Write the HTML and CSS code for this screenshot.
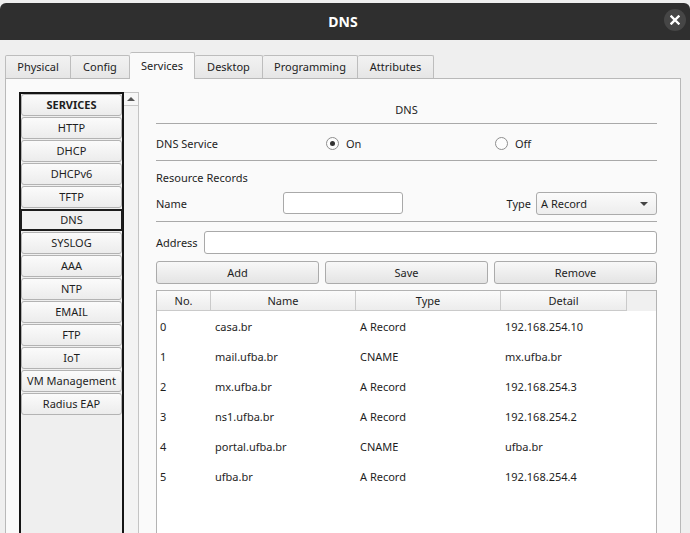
FILE: index.html
```html
<!DOCTYPE html>
<html>
<head>
<meta charset="utf-8">
<link rel="stylesheet" href="styles.css">
</head>
<body>
<div class="window">
  <header class="titlebar">
    <span class="title">DNS</span>
    <span class="close"><svg width="10" height="10" viewBox="0 0 10 10"><path d="M1.5 1.5 L8.5 8.5 M8.5 1.5 L1.5 8.5" stroke="#fff" stroke-width="2.4" stroke-linecap="square"/></svg></span>
  </header>
  <nav class="tabs">
    <span class="tab w-phys">Physical</span>
    <span class="tab w-conf">Config</span>
    <span class="tab active w-serv">Services</span>
    <span class="tab w-desk">Desktop</span>
    <span class="tab w-prog">Programming</span>
    <span class="tab w-attr">Attributes</span>
  </nav>
  <main class="pane">
    <aside class="sidebar">
      <div class="svc-list">
        <div class="svc head">SERVICES</div>
        <div class="svc">HTTP</div>
        <div class="svc">DHCP</div>
        <div class="svc">DHCPv6</div>
        <div class="svc">TFTP</div>
        <div class="svc selected">DNS</div>
        <div class="svc">SYSLOG</div>
        <div class="svc">AAA</div>
        <div class="svc">NTP</div>
        <div class="svc">EMAIL</div>
        <div class="svc">FTP</div>
        <div class="svc">IoT</div>
        <div class="svc">VM Management</div>
        <div class="svc">Radius EAP</div>
      </div>
      <div class="scrollbar"><div class="scroll-up"><span class="arrow"></span></div></div>
    </aside>
    <section class="content">
      <div class="heading">DNS</div>
      <div class="service-row">
        <span class="lbl-service">DNS Service</span>
        <span class="radio-opt"><span class="radio on"></span>On</span>
        <span class="radio-opt"><span class="radio"></span>Off</span>
      </div>
      <div class="records">
        <div class="rr-label">Resource Records</div>
        <div class="name-row">
          <span class="lbl-name">Name</span>
          <span class="input name-input"></span>
          <span class="type-group">
            <span>Type</span>
            <span class="select">A Record<span class="caret"></span></span>
          </span>
        </div>
      </div>
      <div class="address-row">
        <span>Address</span>
        <span class="input addr-input"></span>
      </div>
      <div class="buttons">
        <span class="btn">Add</span>
        <span class="btn">Save</span>
        <span class="btn">Remove</span>
      </div>
      <div class="table">
        <div class="thead">
          <span class="th c-no">No.</span>
          <span class="th c-name">Name</span>
          <span class="th c-type">Type</span>
          <span class="th c-detail">Detail</span>
          <span class="th-rest"></span>
        </div>
        <div class="tr"><span class="c-no">0</span><span class="c-name">casa.br</span><span class="c-type">A Record</span><span class="c-detail">192.168.254.10</span></div>
        <div class="tr"><span class="c-no">1</span><span class="c-name">mail.ufba.br</span><span class="c-type">CNAME</span><span class="c-detail">mx.ufba.br</span></div>
        <div class="tr"><span class="c-no">2</span><span class="c-name">mx.ufba.br</span><span class="c-type">A Record</span><span class="c-detail">192.168.254.3</span></div>
        <div class="tr"><span class="c-no">3</span><span class="c-name">ns1.ufba.br</span><span class="c-type">A Record</span><span class="c-detail">192.168.254.2</span></div>
        <div class="tr"><span class="c-no">4</span><span class="c-name">portal.ufba.br</span><span class="c-type">CNAME</span><span class="c-detail">ufba.br</span></div>
        <div class="tr"><span class="c-no">5</span><span class="c-name">ufba.br</span><span class="c-type">A Record</span><span class="c-detail">192.168.254.4</span></div>
      </div>
    </section>
  </main>
</div>
</body>
</html>
```
FILE: styles.css
```css
* { box-sizing: border-box; }
html, body {
  margin: 0;
  padding: 0;
  width: 690px;
  height: 533px;
  overflow: hidden;
  background: #efefef;
  font-family: "Noto Sans", "Open Sans", sans-serif;
  font-size: 11px;
  color: #1e1e1e;
}
.window { padding-top: 3px; }
.titlebar {
  height: 37px;
  background: #2f2f2f;
  border-radius: 6px 6px 0 0;
  display: flex;
  align-items: center;
  justify-content: center;
  position: relative;
}
.title {
  color: #ffffff;
  font-weight: bold;
  font-size: 14px;
  margin-left: -4px;
}
.close {
  position: absolute;
  right: 4px;
  top: 6px;
  width: 22px;
  height: 22px;
  border-radius: 50%;
  background: #464646;
  display: flex;
  align-items: center;
  justify-content: center;
}
.close svg { display: block; }

.tabs {
  margin-top: 15px;
  height: 23px;
  padding-left: 5px;
  display: flex;
  align-items: flex-end;
}
.tab {
  height: 23px;
  border: 1px solid #bdbdbd;
  border-bottom: none;
  border-left: none;
  border-radius: 2px 2px 0 0;
  background: linear-gradient(#f2f2f2, #e6e6e6);
  display: flex;
  align-items: center;
  justify-content: center;
  padding-bottom: 2px;
  color: #222;
}
.tab:first-child { border-left: 1px solid #bdbdbd; }
.tab.active {
  height: 27px;
  margin-bottom: -1px;
  background: #fafafa;
  position: relative;
  z-index: 1;
  padding-bottom: 2px;
}
.w-phys { width: 66px; }
.w-conf { width: 59px; }
.w-serv { width: 65px; }
.w-desk { width: 68px; }
.w-prog { width: 95px; }
.w-attr { width: 76px; }

.pane {
  margin-left: 5px;
  width: 676px;
  height: 470px;
  border: 1px solid #b9b9b9;
  background: #fafafa;
  padding: 13px 0 0 13px;
  display: flex;
  align-items: flex-start;
}
.sidebar {
  display: flex;
  height: 460px;
}
.svc-list {
  width: 105px;
  height: 100%;
  border: 2px solid #151515;
  background: #efefef;
  display: flex;
  flex-direction: column;
  gap: 1px;
}
.svc {
  height: 22px;
  border: 1px solid #b3b3b3;
  border-radius: 3px;
  background: linear-gradient(#fbfbfb, #ececec);
  display: flex;
  align-items: center;
  justify-content: center;
  padding-bottom: 2px;
  color: #1e1e1e;
}
.svc.head { font-weight: bold; }
.svc.selected {
  border: 2px solid #1c1c1c;
  border-radius: 1px;
  background: #f0f0f0;
  margin: 0 -1px;
}
.scrollbar {
  width: 15px;
  height: 100%;
  border: 1px solid #c4c4c4;
  border-left: none;
  background: #f3f3f3;
}
.scroll-up {
  height: 13px;
  border-bottom: 1px solid #c8c8c8;
  background: #f7f7f7;
  display: flex;
  align-items: center;
  justify-content: center;
}
.arrow {
  width: 0;
  height: 0;
  border-left: 4px solid transparent;
  border-right: 4px solid transparent;
  border-bottom: 4px solid #555;
}

.content {
  margin-left: 17px;
  width: 501px;
  display: flex;
  flex-direction: column;
}
.heading {
  height: 32px;
  padding-top: 5px;
  line-height: 26px;
  text-align: center;
  border-bottom: 1px solid #a9a9a9;
}
.service-row {
  height: 37px;
  padding-top: 2px;
  display: grid;
  grid-template-columns: 170px 169px 1fr;
  align-items: center;
  border-bottom: 1px solid #a9a9a9;
}
.radio-opt {
  display: flex;
  align-items: center;
  gap: 7px;
}
.radio {
  width: 13px;
  height: 13px;
  border-radius: 50%;
  border: 1px solid #8e8e8e;
  background: #fdfdfd;
  display: flex;
  align-items: center;
  justify-content: center;
}
.radio.on::after {
  content: "";
  width: 5px;
  height: 5px;
  border-radius: 50%;
  background: #333;
}
.records {
  padding-top: 9px;
  padding-bottom: 7px;
  border-bottom: 1px solid #a9a9a9;
}
.rr-label { line-height: 16px; }
.name-row {
  margin-top: 6px;
  height: 22px;
  display: flex;
  align-items: center;
}
.lbl-name { width: 127px; }
.input {
  height: 22px;
  border: 1px solid #a9a9a9;
  border-radius: 3px;
  background: #ffffff;
}
.name-input { width: 120px; }
.type-group {
  margin-left: auto;
  display: flex;
  align-items: center;
  gap: 5px;
}
.select {
  width: 121px;
  height: 23px;
  border: 1px solid #ababab;
  border-radius: 3px;
  background: linear-gradient(#fbfbfb, #ededed);
  display: flex;
  align-items: center;
  padding-left: 4px;
  position: relative;
}
.caret {
  position: absolute;
  right: 8px;
  top: 9px;
  width: 0;
  height: 0;
  border-left: 4px solid transparent;
  border-right: 4px solid transparent;
  border-top: 4px solid #444;
}
.address-row {
  margin-top: 9px;
  height: 23px;
  display: flex;
  align-items: center;
  gap: 6px;
}
.addr-input { flex: 1; height: 23px; }
.buttons {
  margin-top: 7px;
  height: 23px;
  display: grid;
  grid-template-columns: 1fr 1fr 1fr;
  gap: 6px;
}
.btn {
  border: 1px solid #ababab;
  border-radius: 3px;
  background: linear-gradient(#f8f8f8, #e4e4e4);
  display: flex;
  align-items: center;
  justify-content: center;
}
.table {
  margin-top: 6px;
  height: 250px;
  border: 1px solid #b3b3b3;
  background: #ffffff;
}
.thead {
  height: 20px;
  display: flex;
  background: #f0f0f0;
}
.th {
  display: flex;
  align-items: center;
  justify-content: center;
  background: linear-gradient(#fbfbfb, #ececec);
  border-right: 1px solid #cacaca;
  border-bottom: 1px solid #cacaca;
}
.th-rest { flex: 1; background: #f0f0f0; }
.c-no { width: 55px; }
.c-name { width: 145px; }
.c-type { width: 145px; }
.c-detail { width: 126px; }
.th.c-no { width: 54px; }
.tr {
  height: 30px;
  display: flex;
  align-items: center;
}
.tr span { padding-left: 3px; }
```
